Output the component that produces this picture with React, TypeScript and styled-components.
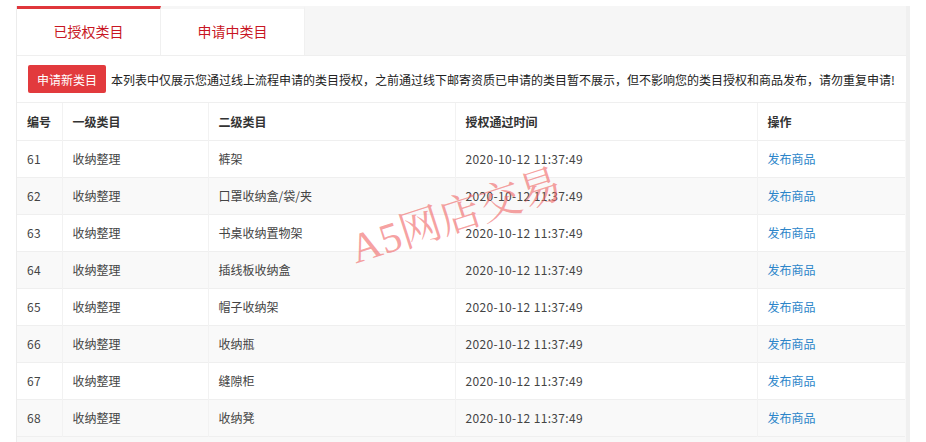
import React from "react";
import styled, {createGlobalStyle} from "styled-components";

const GlobalStyle = createGlobalStyle`
    html, body {
        margin: 0;
        padding: 0;
        background: #fff;
        font-family: "Noto Sans CJK SC", "Microsoft YaHei", sans-serif;
        font-size: 12px;
        color: #333;
    }
`;

const Page = styled.div`
    padding: 6px 16px 0 16px;
    width: 894px;
    height: 436px;
`;

const Panel = styled.div`
    position: relative;
    width: 889px;
    height: 100%;
    border-left: 1px solid #ececec;
    border-right: 4px solid #f0f0f0;
    background: #f8f8f8;
    overflow: hidden;
`;

const TabBar = styled.div`
    display: flex;
    height: 49px;
    background: #f6f6f6;
    border-bottom: 1px solid #efefef;
`;

const Tab = styled.div<{ $active?: boolean }>`
    width: 144px;
    display: flex;
    align-items: center;
    justify-content: center;
    background: #fff;
    font-size: 14px;
    color: #c81623;
    box-sizing: border-box;
    border-top: 3px solid ${p => (p.$active ? "#e0363b" : "#f6f6f6")};
    border-right: 1px solid #f0f0f0;
    padding-bottom: 2px;
`;

const Notice = styled.div`
    display: flex;
    align-items: center;
    gap: 5px;
    height: 46px;
    padding-left: 11px;
    background: #fff;
    border-bottom: 1px solid #efefef;
`;

const RedButton = styled.button`
    border: none;
    border-radius: 2px;
    background: #e23a3d;
    color: #fff;
    font-family: inherit;
    font-size: 12px;
    height: 28px;
    padding: 0 9px;
    cursor: pointer;
`;

const NoticeText = styled.span`
    color: #222;
    font-size: 12px;
    white-space: nowrap;
`;

const Table = styled.table`
    width: 888px;
    border-collapse: collapse;
    table-layout: fixed;
`;

const Row = styled.tr<{ $alt?: boolean }>`
    height: 37px;
    background: ${p => (p.$alt ? "#f9f9f9" : "#fff")};
    border-bottom: 1px solid #efefef;
`;

const Th = styled.th`
    text-align: left;
    font-weight: 600;
    color: #333;
    padding: 0 10px;
    border-right: 1px solid #f2f2f2;
    &:last-child { border-right: none; }
`;

const Td = styled.td<{ $mono?: boolean }>`
    padding: 0 10px;
    color: #444;
    letter-spacing: ${p => (p.$mono ? "0.35px" : "normal")};
    border-right: 1px solid #f2f2f2;
    &:last-child { border-right: none; }
`;

const Link = styled.a`
    color: #2b85c9;
    text-decoration: none;
    cursor: pointer;
`;

const Watermark = styled.div`
    position: absolute;
    left: 324px;
    top: 212px;
    font-family: "Liberation Serif", "Noto Serif CJK SC", serif;
    font-size: 42px;
    color: rgba(240, 100, 100, 0.6);
    transform: rotate(-18deg);
    transform-origin: left top;
    white-space: nowrap;
    pointer-events: none;
`;

const rows = [
    {id: 61, sub: "裤架"},
    {id: 62, sub: "口罩收纳盒/袋/夹"},
    {id: 63, sub: "书桌收纳置物架"},
    {id: 64, sub: "插线板收纳盒"},
    {id: 65, sub: "帽子收纳架"},
    {id: 66, sub: "收纳瓶"},
    {id: 67, sub: "缝隙柜"},
    {id: 68, sub: "收纳凳"},
];

export default function App() {
    return (
        <Page>
            <GlobalStyle/>
            <Panel>
                <TabBar>
                    <Tab $active>已授权类目</Tab>
                    <Tab>申请中类目</Tab>
                </TabBar>
                <Notice>
                    <RedButton>申请新类目</RedButton>
                    <NoticeText>
                        本列表中仅展示您通过线上流程申请的类目授权，之前通过线下邮寄资质已申请的类目暂不展示，但不影响您的类目授权和商品发布，请勿重复申请!
                    </NoticeText>
                </Notice>
                <Table>
                    <colgroup>
                        <col style={{width: 45}}/>
                        <col style={{width: 146}}/>
                        <col style={{width: 247}}/>
                        <col style={{width: 302}}/>
                        <col/>
                    </colgroup>
                    <thead>
                    <Row>
                        <Th>编号</Th>
                        <Th>一级类目</Th>
                        <Th>二级类目</Th>
                        <Th>授权通过时间</Th>
                        <Th>操作</Th>
                    </Row>
                    </thead>
                    <tbody>
                    {rows.map((r, i) => (
                        <Row key={r.id} $alt={i % 2 === 1}>
                            <Td $mono>{r.id}</Td>
                            <Td>收纳整理</Td>
                            <Td>{r.sub}</Td>
                            <Td $mono>2020-10-12 11:37:49</Td>
                            <Td><Link>发布商品</Link></Td>
                        </Row>
                    ))}
                    </tbody>
                </Table>
                <Watermark>A5网店交易</Watermark>
            </Panel>
        </Page>
    );
}
